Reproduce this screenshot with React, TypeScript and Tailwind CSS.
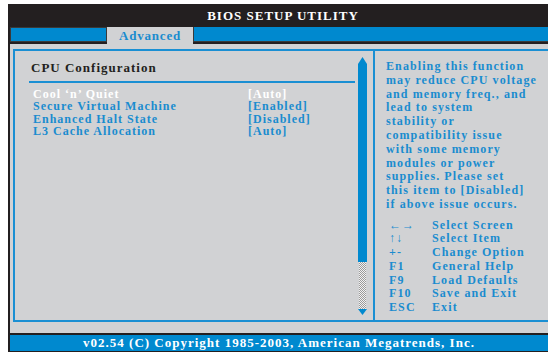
const items = [
  { name: "Cool ‘n’ Quiet", value: "[Auto]", active: true },
  { name: "Secure Virtual Machine", value: "[Enabled]" },
  { name: "Enhanced Halt State", value: "[Disabled]" },
  { name: "L3 Cache Allocation", value: "[Auto]" },
];

const help = [
  "Enabling this function",
  "may reduce CPU voltage",
  "and memory freq., and",
  "lead to system",
  "stability or",
  "compatibility issue",
  "with some memory",
  "modules or power",
  "supplies. Please set",
  "this item to [Disabled]",
  "if above issue occurs.",
];

const keys = [
  ["←→", "Select Screen"],
  ["↑↓", "Select Item"],
  ["+-", "Change Option"],
  ["F1", "General Help"],
  ["F9", "Load Defaults"],
  ["F10", "Save and Exit"],
  ["ESC", "Exit"],
];

const serif = { fontFamily: '"Liberation Serif", "Times New Roman", serif' };

export default function App() {
  return (
    <div className="w-[548px] h-[352px] bg-white overflow-hidden" style={serif}>
      <div className="ml-[8px] mt-[4px] w-[540px] h-[348px] bg-[#231f20] flex flex-col font-bold">
        {/* title */}
        <div className="h-[23px] flex items-center justify-center pl-[10px] text-white text-[13px] tracking-[1px]">
          BIOS SETUP UTILITY
        </div>

        {/* tabs */}
        <div className="h-[17px] flex pl-[2px]">
          <div className="w-[97px] h-[15px] bg-[#0089cf] border border-[#3a3a3a]" />
          <div className="w-[86px] h-[17px] bg-[#d1d2d4] text-[#1a8ccf] text-[13px] tracking-[0.8px] flex items-center justify-center">
            Advanced
          </div>
          <div className="flex-1 h-[15px] bg-[#0089cf] border-l border-b border-[#3a3a3a]" />
        </div>

        {/* body */}
        <div className="ml-[2px] h-[289px] bg-[#d1d2d4] pt-[5px] pl-[3px]">
          <div className="h-[273px] border-t-2 border-l-2 border-b-2 border-[#1a8fd3] flex">
            {/* left pane */}
            <div className="w-[360px] flex border-r-2 border-[#1a8fd3]">
              <div className="flex-1 pl-[14px] pt-[9px]">
                <div className="text-[#231f20] text-[13px] tracking-[1px] leading-[16px] pl-[2px]">
                  CPU Configuration
                </div>
                <div className="mt-[5px] h-[2px] bg-[#1a8fd3] mr-[3px]" />
                <div className="mt-[5px] pl-[4px] text-[12px] tracking-[1px] leading-[12.4px]">
                  {items.map((it) => (
                    <div key={it.name} className={`flex ${it.active ? "text-white" : "text-[#1a8ccf]"}`}>
                      <span className="w-[215px]">{it.name}</span>
                      <span>{it.value}</span>
                    </div>
                  ))}
                </div>
              </div>
              {/* scrollbar */}
              <div className="w-[9px] mr-[6px] mt-[6px] flex flex-col items-center">
                <svg width="9" height="7" viewBox="0 0 9 7">
                  <polygon points="4.5,0 9,7 0,7" fill="#0089cf" />
                </svg>
                <div className="w-[9px] h-[198px] bg-[#0089cf]" />
                <div
                  className="w-[7px] h-[47px]"
                  style={{
                    backgroundColor: "#f2f2f2",
                    backgroundImage:
                      "linear-gradient(45deg,#9a9a9a 25%,transparent 25%,transparent 75%,#9a9a9a 75%),linear-gradient(45deg,#9a9a9a 25%,transparent 25%,transparent 75%,#9a9a9a 75%)",
                    backgroundSize: "2px 2px",
                    backgroundPosition: "0 0,1px 1px",
                  }}
                />
                <svg width="9" height="6" viewBox="0 0 9 6">
                  <polygon points="0,0 9,0 4.5,6" fill="#0089cf" />
                </svg>
              </div>
            </div>

            {/* right pane */}
            <div className="flex-1 pl-[11px] pt-[9px] text-[#1a8ccf] text-[12px] tracking-[1.1px]">
              <div className="leading-[13.8px]">
                {help.map((l) => (
                  <div key={l}>{l}</div>
                ))}
              </div>
              <div className="mt-[7px] leading-[13.7px]">
                {keys.map(([k, d]) => (
                  <div key={k} className="flex">
                    <span className="w-[46px] pl-[3px]">{k}</span>
                    <span>{d}</span>
                  </div>
                ))}
              </div>
            </div>
          </div>
        </div>

        {/* footer */}
        <div className="mt-[2px] h-[16px] ml-[2px] bg-[#0089cf] text-white text-[13px] tracking-[1px] flex items-center justify-center">
          v02.54 (C) Copyright 1985-2003, American Megatrends, Inc.
        </div>
      </div>
    </div>
  );
}
